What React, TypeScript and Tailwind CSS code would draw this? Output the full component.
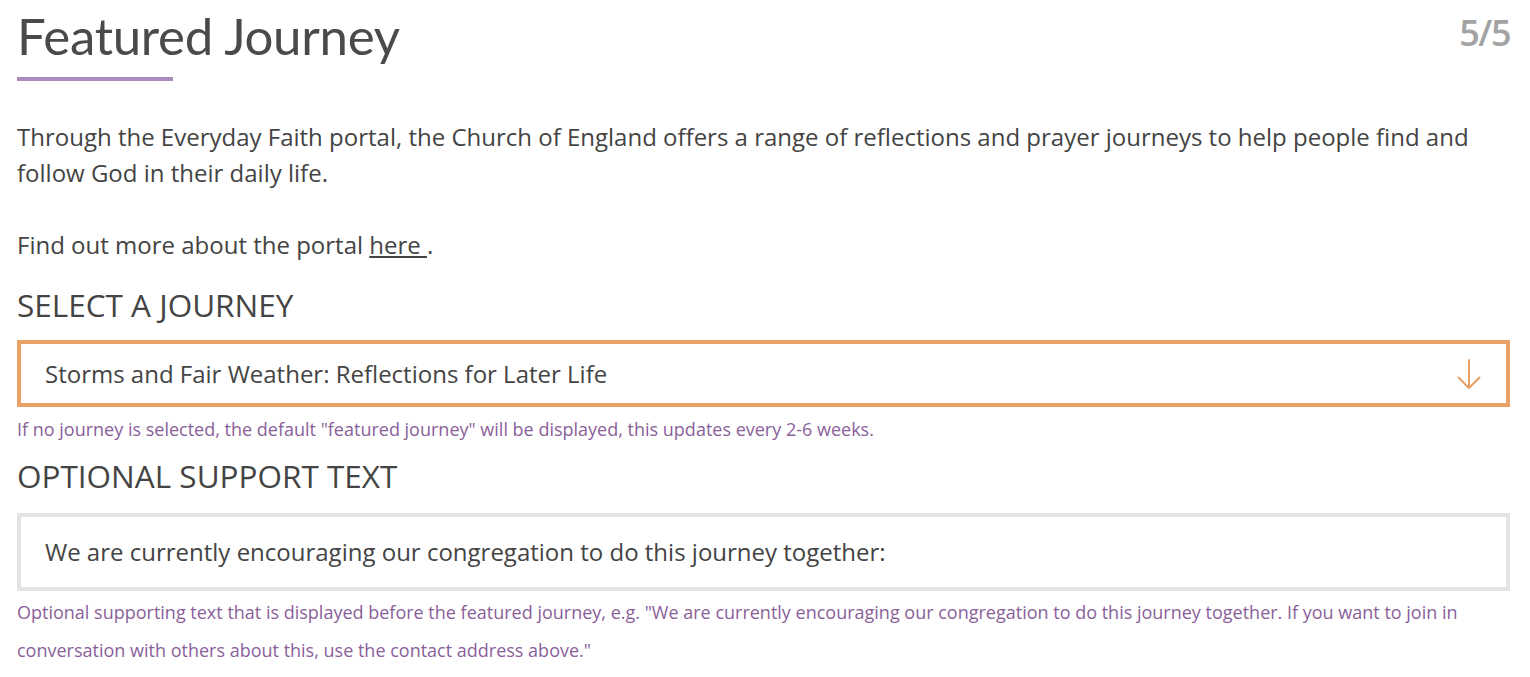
export default function App() {
  return (
    <div className="min-h-screen bg-white pl-[17px] pr-[20px] text-[#444] font-['Open_Sans',sans-serif]">
      <div className="flex items-start justify-between">
        <div>
          <h1 className="font-['Lato',sans-serif] text-[51px] leading-none pt-[10px] tracking-[-0.3px] text-[#4a4a4a]">Featured Journey</h1>
          <div className="mt-[16px] h-[4px] w-[156px] bg-[#a98bbd]" />
        </div>
        <div className="pt-[15px] text-[36px] font-semibold leading-none tracking-[-1.5px] text-[#a3a3a3]">5/5</div>
      </div>

      <p className="mt-[38px] text-[24px] leading-[36px]">
        Through the Everyday Faith portal, the Church of England offers a range of reflections and prayer journeys to help people find and follow God in their daily life.
      </p>
      <p className="mt-[36px] text-[24px] leading-[36px]">
        Find out more about the portal <a href="#" className="underline">here </a>.
      </p>

      <h2 className="mt-[22px] text-[31.5px] leading-[40px]">SELECT A JOURNEY</h2>
      <div className="mt-[15px] flex h-[67px] items-center justify-between border-[4px] border-[#e8a064] pl-[24px] pr-[25px]">
        <span className="text-[24px]">Storms and Fair Weather: Reflections for Later Life</span>
        <svg width="24" height="32" viewBox="0 0 24 32" fill="none" stroke="#e8a064" strokeWidth="2" strokeLinecap="round" strokeLinejoin="round">
          <path d="M12 2 V30 M1.5 19.5 L12 30 L22.5 19.5" />
        </svg>
      </div>
      <p className="mt-[10px] text-[18px] leading-[24px] text-[#8a5f9a]">
        If no journey is selected, the default "featured journey" will be displayed, this updates every 2-6 weeks.
      </p>

      <h2 className="mt-[15px] text-[31.5px] leading-[40px]">OPTIONAL SUPPORT TEXT</h2>
      <div className="mt-[17px] flex h-[78px] items-center border-[4px] border-[#e3e3e3] pl-[24px]">
        <span className="text-[24px]">We are currently encouraging our congregation to do this journey together:</span>
      </div>
      <p className="mt-[2px] text-[18px] leading-[38px] text-[#8a5f9a]">
        Optional supporting text that is displayed before the featured journey, e.g. "We are currently encouraging our congregation to do this journey together. If you want to join in conversation with others about this, use the contact address above."
      </p>
    </div>
  );
}
